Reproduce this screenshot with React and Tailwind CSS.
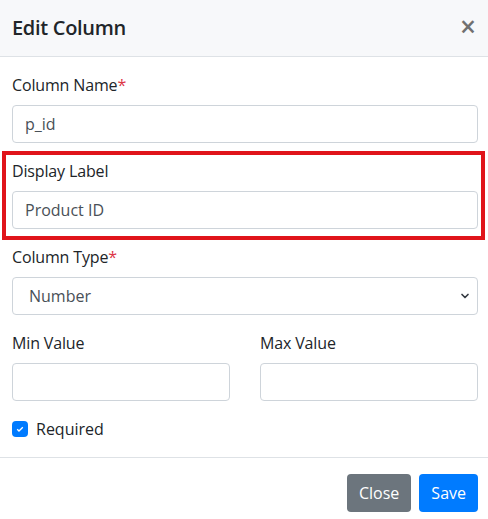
import { useState } from "react";

function Field({ label, required, children }) {
  return (
    <div className="mb-4">
      <label className="mb-2 block leading-6 tracking-[-0.15px] text-[#212529]">
        {label}
        {required && <span className="text-[#dc3545]">*</span>}
      </label>
      {children}
    </div>
  );
}

const inputCls =
  "block h-[38px] w-full rounded border border-[#ced4da] bg-white px-3 text-[#495057] outline-none";

export default function App() {
  const [name, setName] = useState("p_id");
  const [label, setLabel] = useState("Product ID");
  const [type, setType] = useState("number");
  const [required, setRequired] = useState(true);

  return (
    <div className="min-h-[519px] bg-white font-['Open_Sans',sans-serif] text-base text-[#212529]">
      <div className="flex h-[57px] items-center justify-between border-b border-[#dee2e6] bg-[#f7f8fa] pl-3 pr-3">
        <h5 className="text-xl font-semibold tracking-[-0.3px] text-[#212529]">Edit Column</h5>
        <button type="button" className="pb-1 text-[28px] font-semibold leading-none text-[#707070]">
          ×
        </button>
      </div>

      <div className="py-4 pl-3 pr-[10px]">
        <Field label="Column Name" required>
          <input className={inputCls} value={name} onChange={(e) => setName(e.target.value)} />
        </Field>

        <div className="relative">
          <div className="pointer-events-none absolute -bottom-[11px] -left-[10px] -right-[7px] -top-2 border-4 border-[#e0141a]" />
          <Field label="Display Label">
            <input className={inputCls} value={label} onChange={(e) => setLabel(e.target.value)} />
          </Field>
        </div>

        <Field label="Column Type" required>
          <div className="relative">
            <select
              className={`${inputCls} appearance-none pl-4 pr-8`}
              value={type}
              onChange={(e) => setType(e.target.value)}
            >
              <option value="text">Text</option>
              <option value="number">Number</option>
              <option value="date">Date</option>
            </select>
            <svg
              className="pointer-events-none absolute right-[7px] top-1/2 h-3 w-3 -translate-y-1/2 text-[#343a40]"
              viewBox="0 0 16 16"
              fill="none"
              stroke="currentColor"
              strokeWidth="2.2"
              strokeLinecap="round"
              strokeLinejoin="round"
            >
              <path d="M4 6l4 4 4-4" />
            </svg>
          </div>
        </Field>

        <div className="grid grid-cols-2 gap-[30px]">
          <Field label="Min Value">
            <input className={inputCls} />
          </Field>
          <Field label="Max Value">
            <input className={inputCls} />
          </Field>
        </div>

        <label className="flex items-center gap-2 leading-6">
          <button
            type="button"
            onClick={() => setRequired(!required)}
            className={`flex h-4 w-4 items-center justify-center rounded ${
              required ? "bg-[#007bff]" : "border border-[#adb5bd] bg-white"
            }`}
          >
            {required && (
              <svg viewBox="0 0 8 8" className="h-2 w-2">
                <path d="M1.2 4.2l1.8 1.8 3.8-3.8" fill="none" stroke="white" strokeWidth="1.3" />
              </svg>
            )}
          </button>
          Required
        </label>
      </div>

      <div className="flex justify-end gap-2 border-t border-[#dee2e6] pb-3 pl-3 pr-[10px] pt-4">
        <button type="button" className="h-[38px] rounded bg-[#6c757d] px-3 text-white">
          Close
        </button>
        <button type="button" className="h-[38px] rounded bg-[#007bff] px-3 text-white">
          Save
        </button>
      </div>
    </div>
  );
}
